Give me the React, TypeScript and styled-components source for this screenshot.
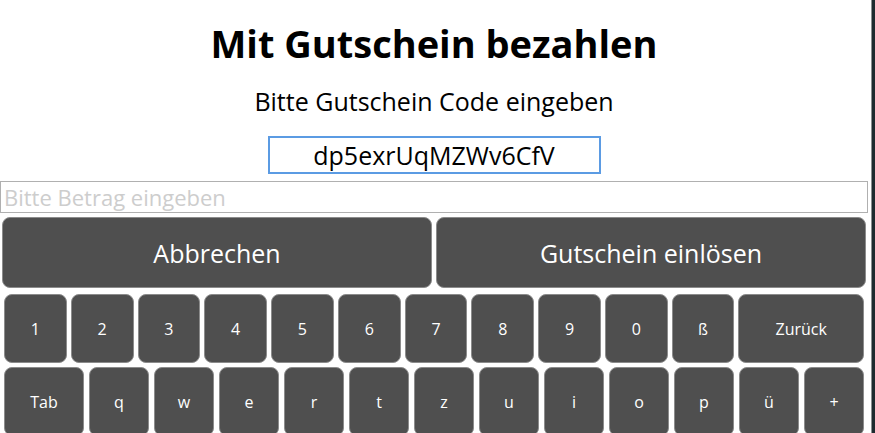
import React from 'react'
import styled, { createGlobalStyle } from 'styled-components'

const GlobalStyle = createGlobalStyle`
  html, body {
    margin: 0;
    padding: 0;
    background: #ffffff;
    font-family: 'Open Sans', 'Noto Sans', sans-serif;
  }
`

const Page = styled.div`
  display: flex;
  width: 875px;
  height: 433px;
  overflow: hidden;
`

const Content = styled.div`
  display: flex;
  flex-direction: column;
  align-items: center;
  width: 868px;
  flex-shrink: 0;
`

const Gutter = styled.div`
  width: 3px;
  flex-shrink: 0;
`

// rand des fensters rechts
const Frame = styled.div`
  width: 3px;
  flex-shrink: 0;
  background: #1e2b2f;
  border-left: 1px solid #8a8f90;
`

const Title = styled.h1`
  margin: 20px 0 0;
  font-size: 38px;
  line-height: 46px;
  font-weight: 700;
  color: #000;
`

const Subtitle = styled.p`
  margin: 21px 0 0;
  font-size: 25px;
  line-height: 29px;
  color: #000;
`

const CodeInput = styled.input`
  box-sizing: border-box;
  margin-top: 20px;
  width: 333px;
  height: 39px;
  border: 2px solid #5b9be3;
  padding: 0 4px;
  font-family: inherit;
  font-size: 25px;
  text-align: center;
  color: #000;
  outline: none;
`

const AmountInput = styled.input`
  box-sizing: border-box;
  margin-top: 7px;
  width: 868px;
  height: 33px;
  border: 1px solid #b0b0b0;
  padding: 0 3px;
  font-family: inherit;
  font-size: 22px;
  outline: none;

  &::placeholder {
    color: #cdcdcd;
  }
`

const ActionRow = styled.div`
  box-sizing: border-box;
  display: flex;
  gap: 4px;
  width: 868px;
  padding: 0 2px;
  margin-top: 4px;
`

const ActionButton = styled.button`
  flex: 1;
  height: 71px;
  background: #4f4f4f;
  border: 1px solid #8c8c8c;
  border-radius: 8px;
  color: #fff;
  font-family: inherit;
  font-size: 25px;
  cursor: pointer;
`

const Keyboard = styled.div`
  box-sizing: border-box;
  display: flex;
  flex-direction: column;
  gap: 4px;
  width: 868px;
  padding: 0 4px;
  margin-top: 6px;
`

const KeyRow = styled.div<{ $gap: number }>`
  display: flex;
  gap: ${(p) => p.$gap}px;
`

const Key = styled.button<{ $grow?: number; $basis?: number }>`
  flex: ${(p) => p.$grow ?? 1} 1 ${(p) => p.$basis ?? 0}px;
  min-width: 0;
  height: 69px;
  background: #4f4f4f;
  border: 1px solid #8c8c8c;
  border-radius: 8px;
  color: #fff;
  font-family: inherit;
  font-size: 16px;
  padding: 0;
  cursor: pointer;
`

const firstRow = ['1', '2', '3', '4', '5', '6', '7', '8', '9', '0', 'ß']
const secondRow = ['q', 'w', 'e', 'r', 't', 'z', 'u', 'i', 'o', 'p', 'ü', '+']

export default function App() {
  const [amount, setAmount] = React.useState('')

  return (
    <>
      <GlobalStyle />
      <Page>
        <Content>
          <Title>Mit Gutschein bezahlen</Title>
          <Subtitle>Bitte Gutschein Code eingeben</Subtitle>
          <CodeInput value="dp5exrUqMZWv6CfV" readOnly />
          <AmountInput
            placeholder="Bitte Betrag eingeben"
            value={amount}
            onChange={(e) => setAmount(e.target.value)}
          />
          <ActionRow>
            <ActionButton>Abbrechen</ActionButton>
            <ActionButton>Gutschein einlösen</ActionButton>
          </ActionRow>
          <Keyboard>
            <KeyRow $gap={4}>
              {firstRow.map((k) => (
                <Key key={k}>{k}</Key>
              ))}
              <Key $grow={2} $basis={4}>Zurück</Key>
            </KeyRow>
            <KeyRow $gap={5}>
              <Key $grow={0} $basis={80}>Tab</Key>
              {secondRow.map((k) => (
                <Key key={k}>{k}</Key>
              ))}
            </KeyRow>
          </Keyboard>
        </Content>
        <Gutter />
        <Frame />
      </Page>
    </>
  )
}
